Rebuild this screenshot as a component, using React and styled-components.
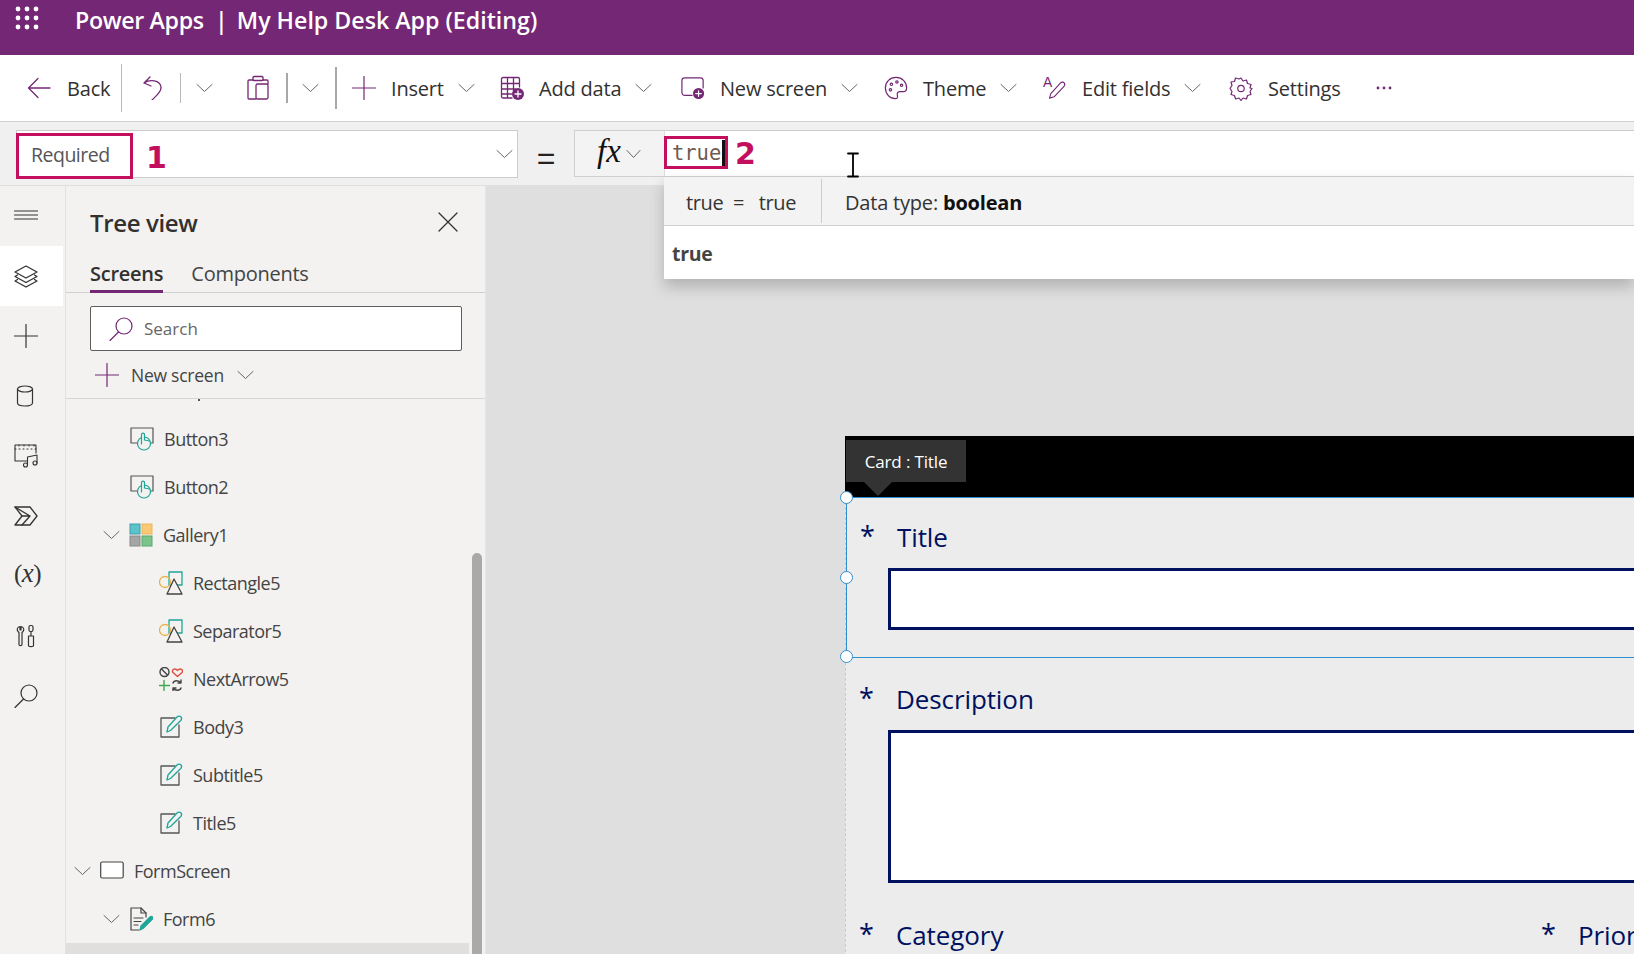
import React from "react";
import styled, { createGlobalStyle } from "styled-components";

const FONT = `"Open Sans", "Noto Sans", "Liberation Sans", sans-serif`;
const PURPLE = "#742774";
const NAVY = "#00115f";
const MARK = "#c2105f";

const Global = createGlobalStyle`
  html, body { margin: 0; padding: 0; width: 1634px; height: 954px; overflow: hidden; background: #fff; }
  #root { width: 1634px; height: 954px; }
  * { box-sizing: border-box; }
`;

const Page = styled.div`
  width: 1634px; height: 954px; display: flex; flex-direction: column; overflow: hidden;
  font-family: ${FONT}; color: #333; position: relative;
`;

/* ---------- header ---------- */
const Header = styled.header`
  height: 55px; flex: none; background: ${PURPLE}; color: #fff; display: flex; align-items: flex-start;
  padding: 6px 0 0 15px; gap: 36px;
`;
const AppTitle = styled.div`
  font-size: 23.2px; font-weight: 600; line-height: 28px; white-space: pre; letter-spacing: -0.35px;
`;
const AppName = styled.span`
  letter-spacing: 0; margin-left: -2px;
`;

/* ---------- toolbar ---------- */
const Toolbar = styled.nav`
  height: 67px; flex: none; background: #fff; border-bottom: 1px solid #d0d0d0;
  display: flex; align-items: center; padding: 0 0 0 27px;
`;
const ToolItem = styled.div`
  width: ${(p) => p.$w}px; flex: none; display: flex; align-items: center; gap: ${(p) => p.$gap ?? 15}px;
`;
const ToolIcon = styled.span`
  width: 24px; height: 26px; flex: none; display: flex; align-items: center; justify-content: center;
`;
const ToolLabel = styled.span`
  font-size: 20px; line-height: 26px; color: #323130; white-space: nowrap; letter-spacing: -0.2px; padding-top: 2px;
`;
const ToolSep = styled.span`
  width: ${(p) => p.$thick ? 2 : 1}px; height: ${(p) => p.$h}px; background: ${(p) => p.$thick ? "#a8a8a8" : "#b9b9b9"};
  flex: none; margin-left: ${(p) => p.$ml || 0}px; margin-right: ${(p) => p.$mr || 0}px;
`;
const ChevSlot = styled.span`
  display: flex; flex: none; margin-left: ${(p) => p.$ml || 0}px;
`;

/* ---------- formula row ---------- */
const FormulaRow = styled.div`
  height: 64px; flex: none; background: #f0f0f0; border-bottom: 1px solid #dedede; display: flex;
  align-items: flex-start; padding: 8px 0 0 16px; position: relative; z-index: 3;
`;
const NameBox = styled.div`
  width: 502px; height: 48px; background: #fff; border: 1px solid #ccc; display: flex; align-items: center;
  justify-content: space-between; padding: 0 4px 0 14px; font-size: 19.5px; color: #555; position: relative; letter-spacing: -0.5px;
`;
const EqualSign = styled.div`
  width: 56px; height: 48px; display: flex; align-items: center; justify-content: center;
  font-size: 32px; color: #222; padding-top: 9px; font-family: "Liberation Sans", sans-serif;
`;
const FxBox = styled.div`
  width: 90px; height: 47px; background: #f3f3f3; border: 1px solid #cfcfcf; border-right: none; display: flex;
  align-items: center; gap: 5px; padding-left: 22px;
`;
const FxGlyph = styled.span`
  font-family: "Liberation Serif", serif; font-style: italic; font-size: 33px; line-height: 40px; color: #111; margin-top: -6px;
`;
const Editor = styled.div`
  flex: 1; height: 46px; background: #fff; border-top: 1px solid #ccc; border-left: 1px solid #ddd; position: relative;
  display: flex; align-items: center; padding: 0 0 1px 7px;
`;
const Code = styled.span`
  font-family: "DejaVu Sans Mono", "Liberation Mono", monospace; font-size: 20.5px; color: #6e5b52; letter-spacing: -0.05px;
`;
const Caret = styled.span`
  width: 2.5px; height: 27px; background: #111; margin-left: 1px;
`;
const MarkBox = styled.span`
  position: absolute; left: ${(p) => p.$l}px; top: ${(p) => p.$t}px; width: ${(p) => p.$w}px; height: ${(p) => p.$h}px;
  border: 3px solid ${MARK}; pointer-events: none;
`;
const MarkDigit = styled.span`
  position: absolute; left: ${(p) => p.$l}px; top: ${(p) => p.$t}px; font-family: "DejaVu Sans", sans-serif;
  font-weight: 700; font-size: 30px; line-height: 33px; color: ${MARK};
`;
const IBeam = styled.span`
  position: absolute; left: 182px; top: 21px; display: flex; z-index: 2;
`;
const Popup = styled.div`
  position: absolute; left: -1px; right: 0; top: 45px; background: #fff; box-shadow: 0 8px 14px rgba(0,0,0,0.2);
`;
const HintRow = styled.div`
  height: 50px; background: #f3f3f3; border-top: 1px solid #ccc; border-bottom: 1px solid #d0d0d0;
  display: flex; align-items: center; font-size: 20px; color: #333; letter-spacing: -0.2px;
`;
const HintExpr = styled.div`
  width: 158px; height: 44px; display: flex; align-items: center; padding: 2px 0 0 22px; border-right: 1px solid #ccc; white-space: pre;
  letter-spacing: -0.35px;
`;
const HintType = styled.div`
  padding: 2px 0 0 23px; b { font-weight: 700; color: #111; }
`;
const ResultRow = styled.div`
  height: 53px; display: flex; align-items: center; padding: 2px 0 0 8px; font-size: 19.5px; font-weight: 700; color: #444;
  letter-spacing: -0.3px;
`;

/* ---------- main ---------- */
const Main = styled.div`
  flex: 1; min-height: 0; display: flex;
`;
const Rail = styled.aside`
  width: 66px; flex: none; background: #f3f2f1; border-right: 1px solid #e3e1df; display: flex; flex-direction: column;
`;
const RailTile = styled.div`
  width: 63px; height: 60px; display: flex; align-items: center; padding-left: 14px; background: ${(p) => p.$active ? "#fff" : "transparent"};
`;
const RailFormula = styled.span`
  font-family: "Liberation Serif", serif; font-size: 25px; color: #333; white-space: nowrap; letter-spacing: -0.5px; margin-top: -6px; i { font-size: 27px; }
`;
const Panel = styled.section`
  width: 420px; flex: none; background: #f3f2f1; display: flex; flex-direction: column; border-right: 1px solid #e6e6e6;
`;
const PanelHead = styled.div`
  height: 70px; flex: none; display: flex; justify-content: space-between; align-items: flex-start; padding: 20px 27px 0 24px;
`;
const PanelTitle = styled.h2`
  margin: 0; font-size: 24px; line-height: 34px; font-weight: 600; color: #323130; letter-spacing: -0.35px;
`;
const CloseBtn = styled.span`
  display: flex; margin-top: 6px;
`;
const Tabs = styled.div`
  height: 37px; flex: none; display: flex; gap: 28px; padding-left: 24px; border-bottom: 1px solid #d2d0ce;
`;
const Tab = styled.div`
  height: 37px; font-size: 20px; line-height: 28px; padding-top: 4px; letter-spacing: -0.25px; color: ${(p) => p.$active ? "#323130" : "#444"};
  font-weight: ${(p) => p.$active ? 600 : 400}; border-bottom: ${(p) => p.$active ? `3px solid ${PURPLE}` : "none"};
`;
const SearchBox = styled.div`
  width: 372px; height: 45px; flex: none; margin: 13px 0 0 24px; background: #fff; border: 1px solid #605e5c; border-radius: 2px;
  display: flex; align-items: center; gap: 11px; padding-left: 18px; font-size: 17px; color: #666;
`;
const NewScreenRow = styled.div`
  height: 48px; flex: none; border-bottom: 1px solid #d8d6d4; display: flex; align-items: center; padding-left: 29px;
  font-size: 17.5px; color: #444; letter-spacing: -0.25px;
`;
const NewScreenLabel = styled.span`
  margin: 0 13px 0 12px;
`;
const TreeList = styled.div`
  flex: 1; min-height: 0; overflow: hidden; position: relative; padding-top: 16px;
`;
const ClippedDot = styled.span`
  position: absolute; left: 132px; top: 0; width: 2px; height: 2px; background: #555;
`;
const Row = styled.div`
  height: 48px; display: flex; align-items: center; position: relative; width: 403px;
  padding-left: ${(p) => p.$indent}px; font-size: 18px; color: #444; letter-spacing: -0.5px;
  background: ${(p) => p.$selected ? "#e1dfdd" : "transparent"};
`;
const RowChev = styled.span`
  width: 26px; flex: none; display: flex;
`;
const RowIcon = styled.span`
  width: 24px; height: 24px; flex: none; display: flex; margin-right: 10px;
`;
const ScrollThumb = styled.div`
  position: absolute; left: 406px; top: 154px; bottom: -10px; width: 10px; border-radius: 5px; background: #a9a9a9;
`;

/* ---------- canvas ---------- */
const Canvas = styled.main`
  flex: 1; min-width: 0; background: #dfdfdf; overflow: hidden; padding: 250px 0 0 359px;
`;
const BlackStrip = styled.div`
  height: 61px; background: #000; position: relative;
`;
const Tooltip = styled.div`
  position: absolute; left: 1px; top: 4px; width: 120px; height: 42px; background: #333; color: #fff; font-size: 17px;
  display: flex; align-items: center; justify-content: center; letter-spacing: -0.15px;
  &::after { content: ""; position: absolute; left: 18px; top: 42px; border: 14px solid transparent; border-top-color: #333; border-bottom: none; }
`;
const Form = styled.div`
  background: #ececec; border-left: 1px dashed #c8c8c8; height: 500px;
`;
const Card = styled.div`
  position: relative; height: ${(p) => p.$h}px; padding-top: ${(p) => p.$pt}px;
  ${(p) => p.$selected && `border: 1px solid #2f8fd0; border-right: none; margin-left: 0;`}
`;
const Handle = styled.span`
  position: absolute; left: -7px; top: ${(p) => p.$t}; width: 13px; height: 13px; border-radius: 50%; margin-top: -7px;
  background: #fff; border: 1.5px solid #2f8fd0;
`;
const LabelRow = styled.div`
  display: flex; align-items: center; height: 38px; padding-left: 13px; color: ${NAVY}; font-size: 26px; letter-spacing: -0.1px;
`;
const Star = styled.span`
  width: 37px; flex: none; font-size: 27px; position: relative; top: -2px;
`;
const TextInput = styled.div`
  margin-left: ${(p) => p.$ml}px; height: ${(p) => p.$h}px; background: #fff; border: 3px solid ${NAVY}; border-right: none; margin-top: ${(p) => p.$mt}px;
`;
const Split = styled.div`
  display: flex;
`;
const SplitCol = styled.div`
  width: ${(p) => p.$w}px; flex: none;
`;

/* ---------- icons ---------- */
const Svg = ({ w = 24, h = 24, vb, children, c = PURPLE, sw = 1.3, ...r }) => (
  <svg width={w} height={h} viewBox={vb || `0 0 ${w} ${h}`} fill="none" stroke={c} strokeWidth={sw} strokeLinecap="round" strokeLinejoin="round" {...r}>{children}</svg>
);
const Chevron = ({ w = 17, c = "#666" }) => (
  <Svg w={w} h={10} c={c} sw={1}><path d={`M1 1.5 L${w / 2} 8.5 L${w - 1} 1.5`} /></Svg>
);
const Waffle = () => (
  <svg width="24" height="24" viewBox="0 0 24 24" fill="#fff">
    {[3, 12, 21].flatMap((y) => [3, 12, 21].map((x) => <circle key={`${x}-${y}`} cx={x} cy={y} r="2.4" />))}
  </svg>
);
const PlusBadge = ({ x, y }) => (
  <g>
    <circle cx={x} cy={y} r="6" fill={PURPLE} stroke="none" />
    <path d={`M${x - 3} ${y} H${x + 3} M${x} ${y - 3} V${y + 3}`} stroke="#fff" strokeWidth="1.3" />
  </g>
);
const BackIcon = () => <Svg><path d="M23 12H1.5M11 2.5 1.5 12l9.5 9.5" /></Svg>;
const UndoIcon = () => <Svg vb="0 0 24 24"><path d="M9 1 3 7l7 3M3 7c6-4 16-3 17 4 .5 5-5 9-9 13" /></Svg>;
const ClipIcon = () => (
  <Svg w={22} h={26}>
    <path d="M6 5H2a1 1 0 0 0-1 1v17a1 1 0 0 0 1 1h7" />
    <rect x="9" y="9" width="12" height="15" rx="1.5" />
    <rect x="6" y="1.500" width="10" height="4" rx="1" />
    <path d="M16 5h4a1 1 0 0 1 1 1v3" />
  </Svg>
);
const PlusIcon = ({ s = 24, c = PURPLE }) => <Svg w={s} h={s} c={c} sw={1.2}><path d={`M${s / 2} 0.5V${s - 0.5}M0.5 ${s / 2}H${s - 0.5}`} /></Svg>;
const TableIcon = () => <Svg><path d="M12 22H3a1.500 1.500 0 0 1-1.500-1.500V3A1.500 1.500 0 0 1 3 1.500h15A1.500 1.500 0 0 1 19.500 3v8M1.500 7.500h18M1.500 13h14M1.500 18h10M7.500 1.500V22M13.500 1.500V15" /><PlusBadge x={18} y={18} /></Svg>;
const ScreenPlusIcon = () => <Svg w={26} h={24}><path d="M12 20H4a3 3 0 0 1-3-3V4a3 3 0 0 1 3-3h17a3 3 0 0 1 3 3v8" /><PlusBadge x={19} y={18} /></Svg>;
const PaletteIcon = () => (
  <Svg w={26} h={26}>
    <path d="M13 1.500C6.500 1.500 1.500 6.500 1.500 13S6.500 24.500 12 24.500c2.500 0 3-1.500 2.500-3.500-.7-2.500.5-4 3-4h3.500c2 0 3.500-1.500 3.500-4 0-6.500-5-11.500-11.500-11.500Z" />
    <circle cx="8" cy="9" r="1.300" /><circle cx="14" cy="6.500" r="1.300" /><circle cx="19" cy="10" r="1.300" /><circle cx="7" cy="15" r="1.300" />
  </Svg>
);
const EditFieldsIcon = () => (
  <Svg w={26} h={26} sw={1.2}>
    <text x="0" y="12" fontFamily="Liberation Sans, sans-serif" fontSize="15" fill={PURPLE} stroke="none">A</text>
    <path d="M7 24l1.500-5L19 7.500c1.200-1.200 3-1.200 4 0s.7 2.700-.5 4L12 22.500Z" />
  </Svg>
);
const GearIcon = () => (
  <Svg w={25} h={25} vb="0 0 24 24" sw={1.2}>
    <path d="M12 1.500l2 3 3.500-1 1 3.500 3.500 1-1 3.500 2 .5-2 3 1 3-3.500 1-1 3.500-3.500-1-2 2.500-2-2.500-3.500 1-1-3.500-3.500-1 1-3-2-3 2-3-1-3.500 3.500-.5 1-3.500 3.500 1Z" />
    <circle cx="12" cy="12" r="3.200" />
  </Svg>
);
const Dots = () => (
  <svg width="16" height="4" viewBox="0 0 16 4" fill={PURPLE}><circle cx="2" cy="2" r="1.400" /><circle cx="8" cy="2" r="1.400" /><circle cx="14" cy="2" r="1.400" /></svg>
);
const IBeamIcon = () => (
  <Svg w={12} h={26} c="#000" sw={1.8}><path d="M1 1.500h10M1 24.500h10M6 1.500v23" /></Svg>
);

const D = "#333";
const HamburgerIcon = () => <Svg c={D} sw={1}><path d="M0.500 7H24M0.500 11H24M0.500 15H24" /></Svg>;
const LayersIcon = () => (
  <Svg c={D} sw={1.3}>
    <path d="M12 2 23 8l-11 6L1 8Z" /><path d="M3.500 11 1 12.500l11 6 11-6-2.500-1.500" /><path d="M3.500 15.500 1 17l11 6 11-6-2.500-1.500" />
  </Svg>
);
const DbIcon = () => <Svg c={D} w={18} h={22} sw={1.2} style={{ marginLeft: 2 }}><ellipse cx="9" cy="4" rx="7.500" ry="3" /><path d="M1.500 4v14c0 1.700 3.300 3 7.500 3s7.500-1.300 7.500-3V4" /></Svg>;
const MediaIcon = () => (
  <Svg c={D} sw={1.1}>
    <path d="M13 17H1V1h21v8" /><path d="M1 5h21M5 1v4M10 1v4M15 1v4M20 1v4" strokeDasharray="1 3" />
    <circle cx="11.500" cy="21" r="2" /><circle cx="21" cy="19" r="2" /><path d="M13.500 21V13l9.500-2v8" />
  </Svg>
);
const FlowIcon = () => <Svg c={D} sw={1.3}><path d="M1 3h15l7 9-7 9H1l7-9Z" /><path d="M1 3l15 9-8 9M8 12h8" /></Svg>;
const ToolsIcon = () => (
  <Svg c={D} sw={1.2}>
    <path d="M6 2.500a3 3 0 0 0-2 5l1 1v12c0 1.500 3 1.500 3 0v-12l1-1a3 3 0 0 0-2-5V6H6Z" />
    <rect x="15" y="1.500" width="4" height="6" rx="1.500" /><path d="M17 7.500V12M14.500 12h5v9.500c0 1.500-5 1.500-5 0Z" />
  </Svg>
);
const SearchIcon = ({ c = D, s = 24, sw = 1.2 }) => <Svg c={c} w={s} h={s} sw={sw} vb="0 0 24 24"><circle cx="15" cy="9" r="8" /><path d="M9.500 15 1 23.500" /></Svg>;
const CloseIcon = () => <Svg w={20} h={20} c={D} sw={1.3}><path d="M1 1l18 18M19 1 1 19" /></Svg>;

const G = "#555";
const T = "#1fa598";
const ButtonIcon = () => (
  <Svg c={G} sw={1.2}>
    <path d="M8 16H1V1h22v15h-2" /><g stroke={T}><circle cx="14" cy="16.500" r="6.500" fill="#f3f2f1" /><path d="M11.500 17V7.500c0-1.800 3-1.800 3 0V13l5 1" fill="#f3f2f1" /></g>
  </Svg>
);
const GalleryIcon = () => (
  <svg width="24" height="24" viewBox="0 0 24 24">
    <rect x="1" y="1" width="10" height="10" fill="#5cc3ca" stroke="#3a9ea8" /><rect x="13" y="1" width="10" height="10" fill="#f9c874" stroke="#eeb65c" />
    <rect x="1" y="13" width="10" height="10" fill="#a5a5a5" stroke="#888" /><rect x="13" y="13" width="10" height="10" fill="#7bc48c" stroke="#58a86a" />
  </svg>
);
const ShapesIcon = () => (
  <Svg sw={1.3} c={G}>
    <rect x="10" y="1" width="13" height="13" stroke={T} /><circle cx="6" cy="11" r="5.500" stroke="#eab14e" />
    <path d="M15 8 8 23h15Z" fill="#f3f2f1" stroke="#444" />
  </Svg>
);
const GlyphsIcon = () => (
  <Svg sw={1.4} c="#444">
    <circle cx="5.500" cy="5" r="4.500" /><path d="M2.500 2 8.500 8" />
    <path d="M18.500 9.500 14 5.500c-2-2.500 2-5 4.500-2 2.500-3 6.500-.5 4.500 2Z" stroke="#e04b3a" />
    <path d="M5 13.500v10M0.500 18.500h10" stroke="#3ea84f" />
    <path d="M14 16c1-3 6-3 8 0M22 21c-1 3-6 3-8 0M22 13v3h-3M14 24v-3h3" />
  </Svg>
);
const EditIcon = () => (
  <Svg sw={1.3} c={G}>
    <path d="M16 3H2v19h18V10" /><path d="M8 17l1-5L18 2c1-1 3-1 4 0s.5 2.500-.3 3.500L11.500 15.500Z" stroke={T} fill="#f3f2f1" />
  </Svg>
);
const ScreenIcon = () => <Svg c="#444" sw={1.2}><rect x="0.700" y="3" width="22.500" height="16" rx="1.500" fill="#fff" /></Svg>;
const FormIcon = () => (
  <Svg c="#444" sw={1.2}>
    <path d="M17 10V6l-5-5H2v22h8" /><path d="M12 1v5h5M5 11h9M5 14.500h7M5 18h4" />
    <path d="M11 23l1-4 9-9c1-1 2-1 2.500 0s.300 2-.500 2.500l-9 9Z" fill={T} stroke={T} />
  </Svg>
);

const TOOLS = [
  { w: 148, icon: <PlusIcon />, label: "Insert" },
  { w: 181, icon: <TableIcon />, label: "Add data" },
  { w: 203, icon: <ScreenPlusIcon />, label: "New screen" },
  { w: 159, icon: <PaletteIcon />, label: "Theme" },
  { w: 186, icon: <EditFieldsIcon />, label: "Edit fields" },
  { w: 147, icon: <GearIcon />, label: "Settings", noChev: true },
];
const RAIL = [
  { icon: <HamburgerIcon /> }, { icon: <LayersIcon />, active: true }, { icon: <PlusIcon c={D} /> },
  { icon: <DbIcon /> }, { icon: <MediaIcon /> }, { icon: <FlowIcon /> },
  { icon: <RailFormula>(<i>x</i>)</RailFormula> }, { icon: <ToolsIcon /> }, { icon: <SearchIcon /> },
];
const TREE = [
  { indent: 64, icon: <ButtonIcon />, label: "Button3" },
  { indent: 64, icon: <ButtonIcon />, label: "Button2" },
  { indent: 37, chev: true, icon: <GalleryIcon />, label: "Gallery1" },
  { indent: 93, icon: <ShapesIcon />, label: "Rectangle5" },
  { indent: 93, icon: <ShapesIcon />, label: "Separator5" },
  { indent: 93, icon: <GlyphsIcon />, label: "NextArrow5" },
  { indent: 93, icon: <EditIcon />, label: "Body3" },
  { indent: 93, icon: <EditIcon />, label: "Subtitle5" },
  { indent: 93, icon: <EditIcon />, label: "Title5" },
  { indent: 8, chev: true, icon: <ScreenIcon />, label: "FormScreen" },
  { indent: 37, chev: true, icon: <FormIcon />, label: "Form6" },
  { indent: 0, selected: true, label: "" },
];

export default function App() {
  return (
    <Page>
      <Global />
      <Header>
        <Waffle />
        <AppTitle>{"Power Apps  |  "}<AppName>My Help Desk App (Editing)</AppName></AppTitle>
      </Header>

      <Toolbar>
        <ToolItem $w={94} $gap={16}><ToolIcon><BackIcon /></ToolIcon><ToolLabel>Back</ToolLabel></ToolItem>
        <ToolSep $h={48} $mr={19} />
        <ToolIcon><UndoIcon /></ToolIcon>
        <ToolSep $h={30} $ml={15} />
        <ChevSlot $ml={15}><Chevron /></ChevSlot>
        <ChevSlot $ml={33}><ToolIcon><ClipIcon /></ToolIcon></ChevSlot>
        <ToolSep $thick $h={30} $ml={16} />
        <ChevSlot $ml={14}><Chevron /></ChevSlot>
        <ToolSep $thick $h={42} $ml={16} $mr={15} />
        {TOOLS.map((t) => (
          <ToolItem key={t.label} $w={t.w}>
            <ToolIcon>{t.icon}</ToolIcon>
            <ToolLabel>{t.label}</ToolLabel>
            {!t.noChev && <ChevSlot $ml={-1}><Chevron /></ChevSlot>}
          </ToolItem>
        ))}
        <Dots />
      </Toolbar>

      <FormulaRow>
        <NameBox>
          Required
          <ChevSlot><Chevron /></ChevSlot>
          <MarkBox $l={-1} $t={2} $w={117} $h={46} />
          <MarkDigit $l={129} $t={10}>1</MarkDigit>
        </NameBox>
        <EqualSign>=</EqualSign>
        <FxBox><FxGlyph>fx</FxGlyph><Chevron w={15} /></FxBox>
        <Editor>
          <Code>true</Code>
          <Caret />
          <MarkBox $l={-1} $t={5} $w={64} $h={33} />
          <MarkDigit $l={70} $t={6}>2</MarkDigit>
          <IBeam><IBeamIcon /></IBeam>
          <Popup>
            <HintRow>
              <HintExpr>{"true  =   true"}</HintExpr>
              <HintType>Data type: <b>boolean</b></HintType>
            </HintRow>
            <ResultRow>true</ResultRow>
          </Popup>
        </Editor>
      </FormulaRow>

      <Main>
        <Rail>
          {RAIL.map((r, i) => <RailTile key={i} $active={r.active}>{r.icon}</RailTile>)}
        </Rail>
        <Panel>
          <PanelHead>
            <PanelTitle>Tree view</PanelTitle>
            <CloseBtn><CloseIcon /></CloseBtn>
          </PanelHead>
          <Tabs>
            <Tab $active>Screens</Tab>
            <Tab>Components</Tab>
          </Tabs>
          <SearchBox><SearchIcon c={PURPLE} />Search</SearchBox>
          <NewScreenRow>
            <PlusIcon />
            <NewScreenLabel>New screen</NewScreenLabel>
            <Chevron />
          </NewScreenRow>
          <TreeList>
            <ClippedDot />
            {TREE.map((n, i) => (
              <Row key={i} $indent={n.indent} $selected={n.selected}>
                {n.chev && <RowChev><Chevron /></RowChev>}
                {n.icon && <RowIcon>{n.icon}</RowIcon>}
                {n.label}
              </Row>
            ))}
            <ScrollThumb />
          </TreeList>
        </Panel>
        <Canvas>
          <BlackStrip><Tooltip>Card : Title</Tooltip></BlackStrip>
          <Form>
            <Card $selected $h={161} $pt={20}>
              <Handle $t="0" /><Handle $t="50%" /><Handle $t="100%" />
              <LabelRow><Star>*</Star>Title</LabelRow>
              <TextInput $ml={41} $h={62} $mt={12} />
            </Card>
            <Card $h={258} $pt={22}>
              <LabelRow><Star>*</Star>Description</LabelRow>
              <TextInput $ml={42} $h={153} $mt={12} />
            </Card>
            <Split>
              <SplitCol $w={682}><LabelRow><Star>*</Star>Category</LabelRow></SplitCol>
              <SplitCol $w={100}><LabelRow><Star>*</Star>Priority</LabelRow></SplitCol>
            </Split>
          </Form>
        </Canvas>
      </Main>
    </Page>
  );
}
